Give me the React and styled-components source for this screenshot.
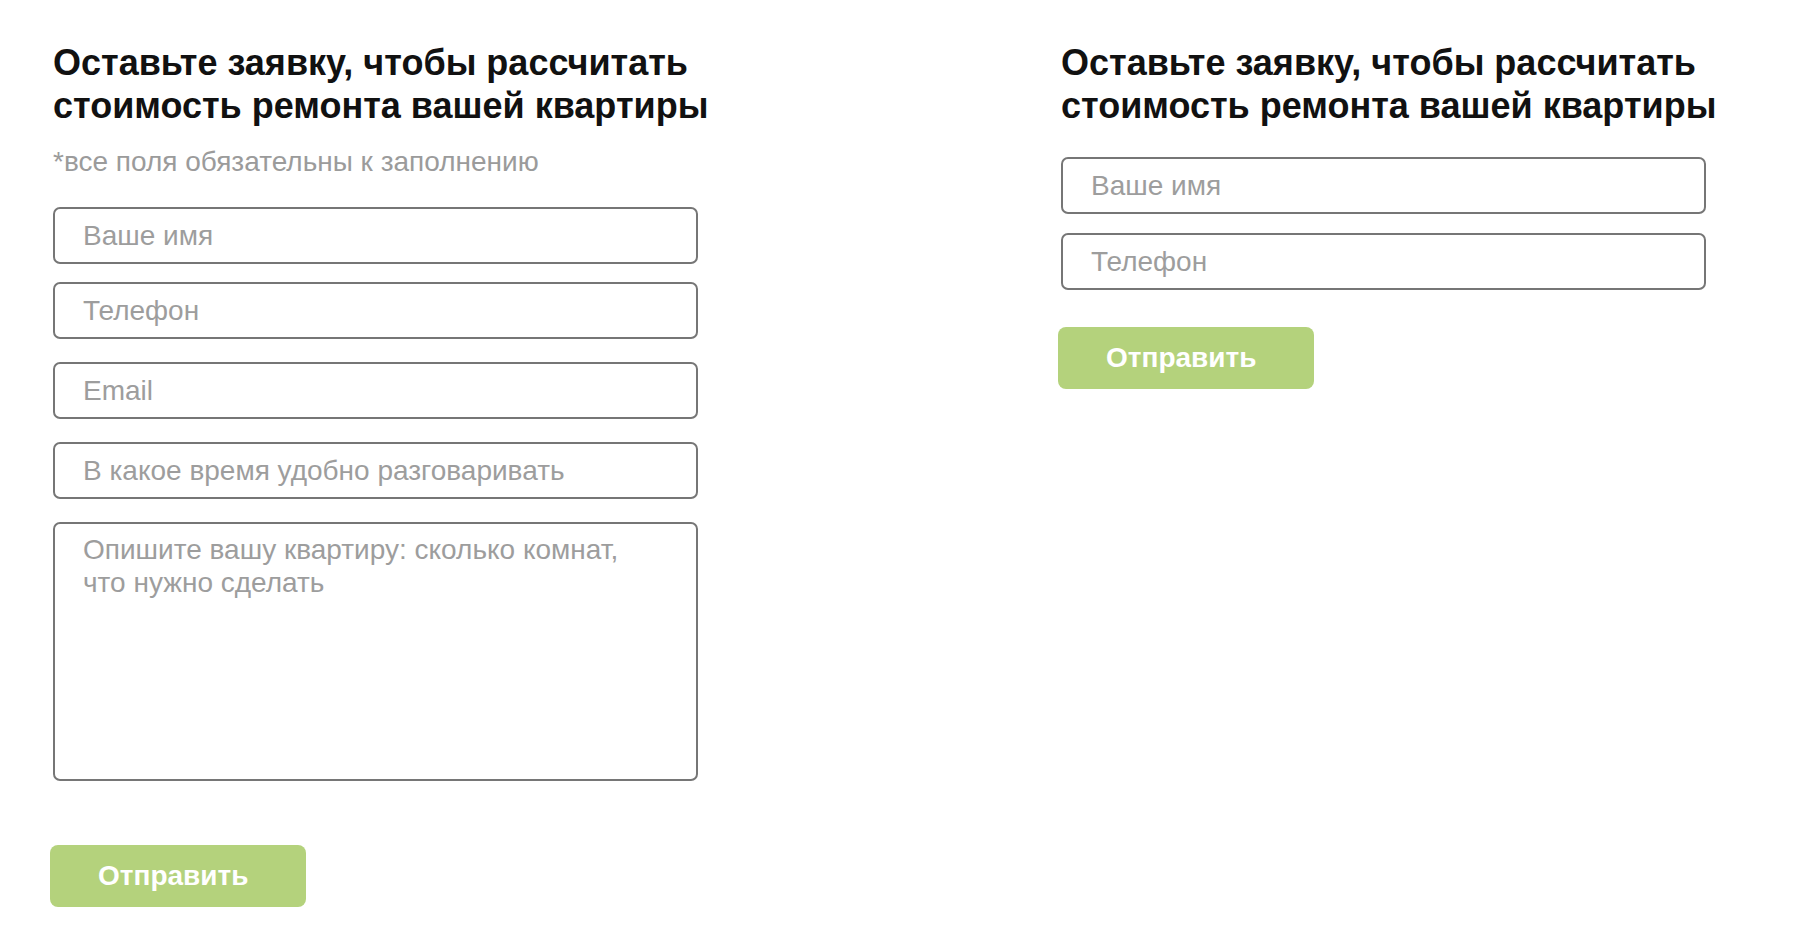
import React from "react";
import styled, { createGlobalStyle } from "styled-components";

const GlobalStyle = createGlobalStyle`
  html, body {
    margin: 0;
    padding: 0;
    background: #ffffff;
  }
  body {
    font-family: "Liberation Sans", Arial, sans-serif;
  }
  * {
    box-sizing: border-box;
  }
`;

const Page = styled.div`
  width: 1800px;
  min-height: 928px;
  padding: 41px 0 0 50px;
  display: grid;
  grid-template-columns: 648px 648px;
  column-gap: 360px;
  align-items: start;
`;

const Form = styled.form`
  display: flex;
  flex-direction: column;
  align-items: flex-start;
`;

const Title = styled.h2`
  margin: 0 0 0 3px;
  font-size: 36px;
  line-height: 43px;
  font-weight: 700;
  color: #111;
  white-space: nowrap;
`;

const Note = styled.p`
  margin: 19px 0 0 3px;
  font-size: 28px;
  line-height: 32px;
  color: #9b9b9b;
`;

const Field = styled.input`
  display: block;
  width: 645px;
  height: 57px;
  margin: ${({ $top }) => $top}px 0 0 3px;
  padding: 0 28px;
  border: 2px solid #767676;
  border-radius: 7px;
  font-family: "Liberation Sans", Arial, sans-serif;
  font-size: 28px;
  color: #333;
  outline: none;

  &::placeholder {
    color: #9d9d9d;
  }
`;

const Area = styled.textarea`
  display: block;
  width: 645px;
  height: 259px;
  margin: 23px 0 0 3px;
  padding: 9px 28px;
  border: 2px solid #767676;
  border-radius: 7px;
  font-family: "Liberation Sans", Arial, sans-serif;
  font-size: 28px;
  line-height: 33px;
  color: #333;
  resize: none;
  outline: none;

  &::placeholder {
    color: #9d9d9d;
  }
`;

const Submit = styled.button`
  width: 256px;
  height: 62px;
  margin-top: ${({ $top }) => $top}px;
  padding: 0 0 0 48px;
  border: none;
  border-radius: 8px;
  background: #b4d27c;
  color: #fff;
  font-family: "Liberation Sans", Arial, sans-serif;
  font-size: 28px;
  font-weight: 700;
  text-align: left;
  cursor: pointer;
`;

const Heading = () => (
  <Title>
    Оставьте заявку, чтобы рассчитать
    <br />
    стоимость ремонта вашей квартиры
  </Title>
);

export default function App() {
  return (
    <>
      <GlobalStyle />
      <Page>
        <Form onSubmit={(e) => e.preventDefault()}>
          <Heading />
          <Note>*все поля обязательны к заполнению</Note>
          <Field $top={29} placeholder="Ваше имя" />
          <Field $top={18} placeholder="Телефон" />
          <Field $top={23} placeholder="Email" />
          <Field $top={23} placeholder="В какое время удобно разговаривать" />
          <Area placeholder={"Опишите вашу квартиру: сколько комнат,\nчто нужно сделать"} />
          <Submit $top={64}>Отправить</Submit>
        </Form>
        <Form onSubmit={(e) => e.preventDefault()}>
          <Heading />
          <Field $top={30} placeholder="Ваше имя" />
          <Field $top={19} placeholder="Телефон" />
          <Submit $top={37}>Отправить</Submit>
        </Form>
      </Page>
    </>
  );
}
